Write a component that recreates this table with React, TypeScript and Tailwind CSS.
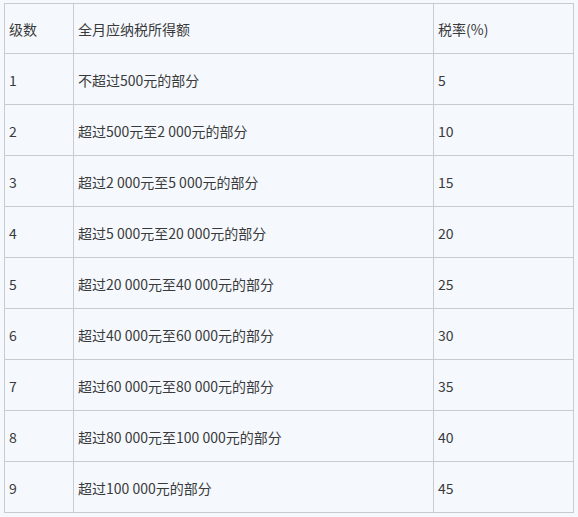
import React from "react";

const rows: [string, string, string][] = [
  ["1", "不超过500元的部分", "5"],
  ["2", "超过500元至2 000元的部分", "10"],
  ["3", "超过2 000元至5 000元的部分", "15"],
  ["4", "超过5 000元至20 000元的部分", "20"],
  ["5", "超过20 000元至40 000元的部分", "25"],
  ["6", "超过40 000元至60 000元的部分", "30"],
  ["7", "超过60 000元至80 000元的部分", "35"],
  ["8", "超过80 000元至100 000元的部分", "40"],
  ["9", "超过100 000元的部分", "45"],
];

const base =
  "flex items-center pl-[4px] pt-[2px] border-r border-b border-[#c8cbcf] whitespace-pre";
const cell = base + " h-[51px]";
const head = base + " h-[50px]";

export default function App() {
  return (
    <div
      className="w-[578px] h-[517px] bg-[#f5f9fe] pt-[3px] pl-[4px] text-[14px] text-[#3a3a3a]"
      style={{ fontFamily: '"Noto Sans CJK SC", "Noto Sans", sans-serif' }}
    >
      <div className="grid grid-cols-[69px_360px_140px] w-[570px] border-l border-t border-[#c8cbcf]">
        <div className={head}>级数</div>
        <div className={head}>全月应纳税所得额</div>
        <div className={head}>税率(%)</div>
        {rows.map((r) => (
          <React.Fragment key={r[0]}>
            <div className={cell}>{r[0]}</div>
            <div className={cell}>{r[1]}</div>
            <div className={cell}>{r[2]}</div>
          </React.Fragment>
        ))}
      </div>
    </div>
  );
}
